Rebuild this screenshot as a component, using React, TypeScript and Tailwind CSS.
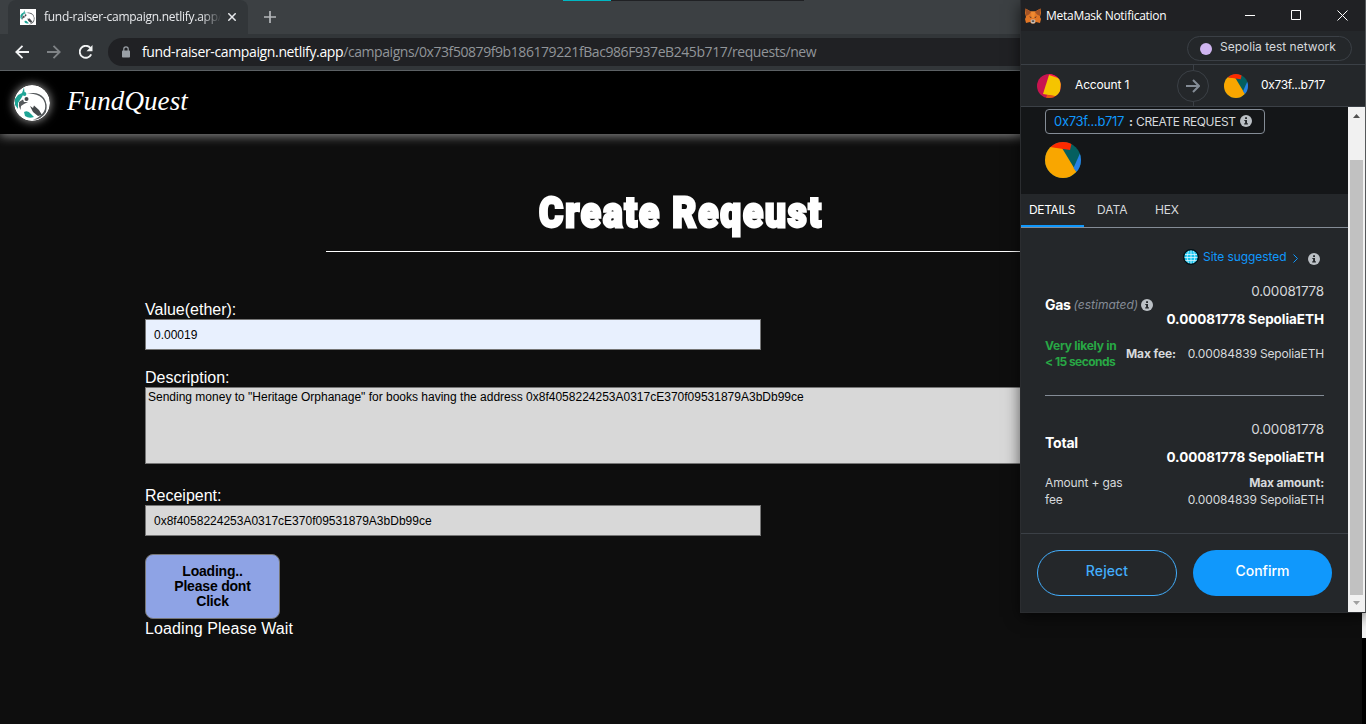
import React from "react";

function CraneLogo({ className }: { className: string }) {
  return (
    <svg viewBox="0 0 36 36" className={`shrink-0 ${className}`}>
      <circle cx="18" cy="18" r="18" fill="#fff" />
      <path d="M1 14 L4 10 L8 8 L10 2.500 L10.500 7 L8 12 L6 15 L4 18 L4 24 L1 20z" fill="#1fa596" />
      <circle cx="10.500" cy="9" r="1.900" fill="#1fa596" />
      <path d="M10 27 Q14 25 17 29 L20 32 Q15 34 11 31z" fill="#1fa596" />
      <path d="M5 17 L9 14.500 L10 17 L14 17 L10 19 L7 21 L6.500 25 Q4 21 5 17z" fill="#55595c" />
      <circle cx="12.500" cy="14" r="2" fill="#44484b" />
      <path d="M13 9 Q24 6 30 13 Q34 19 32 27 Q28 34 19 35 Q29 31 31 24 Q32 17 28 13 Q22 8 13 9z" fill="#55595c" />
      <path d="M16 21 L19 23 L20 20.500 L25 25 L28 30 L24 31 L19 27z" fill="#44484b" />
    </svg>
  );
}

function Jazz({ className }: { className: string }) {
  return (
    <svg viewBox="0 0 36 36" className={`shrink-0 rounded-full ${className}`}>
      <rect width="36" height="36" fill="#045f5f" />
      <path d="M0 4 L17 6 L31.500 30 L24 36 L0 36z" fill="#f9a600" />
      <path d="M5 5 L10 0 L27 0 L25 8z" fill="#fc2a00" />
      <path d="M36 9 L28.500 26 L31.500 30 L36 27z" fill="#2780e3" />
    </svg>
  );
}

function Info({ className }: { className: string }) {
  return (
    <svg viewBox="0 0 12 12" className={`size-3 shrink-0 ${className}`}>
      <circle cx="6" cy="6" r="6" fill="#bbc0c5" />
      <path d="M5.100 2.300h1.900v1.600H5.100zM4.300 4.900h2.700v3.400h.9v1.200H4.200V8.300h.9V6h-.8z" fill="#24272a" />
    </svg>
  );
}

function Fox() {
  return (
    <svg viewBox="0 0 16 16" className="size-4 shrink-0">
      <path d="M.5 .5 L6 3.500h4L15.500 .5 L16 5l-1 4 1 2-1 4-4-1-1.500 1.500h-3L5 14l-4 1-1-4 1-2-1-4z" fill="#e27625" />
      <path d="M.5 .5 L6 4 4 6.500 1 8zM15.500 .5 10 4l2 2.500L15 8z" fill="#a35326" />
      <path d="M6 3.500h4L9.500 10h-3z" fill="#f08a31" />
      <path d="M4 8.500l2.500.5-.5 1zM12 8.500l-2.500.5.5 1z" fill="#3a2b2b" />
      <path d="M5.500 12.500l1-1h3l1 1-.5 2-1 1h-2l-1-1z" fill="#c8bdb4" />
      <path d="M6.800 12.500h2.400v1.200H6.800z" fill="#24272a" />
    </svg>
  );
}

function BrowserChrome() {
  return (
    <header className="relative z-10 h-[71px] shrink-0 border-b border-[#5c6164] bg-[#35363a] font-['Open_Sans','Noto_Sans',sans-serif]">
      <div className="flex h-[34px] bg-[#3c4043] pl-2">
        <div className="flex h-[34px] w-[240px] items-center rounded-t-lg bg-[#323639] pl-3">
          <div className="flex size-4 items-center justify-center bg-white">
            <CraneLogo className="size-4" />
          </div>
          <span className="ml-2 w-[179px] shrink-0 text-[12px] leading-4 tracking-[-0.27px] whitespace-nowrap text-[#e8eaed] [mask-image:linear-gradient(to_right,black_88%,transparent_99%)]">
            fund-raiser-campaign.netlify.app/
          </span>
          <svg viewBox="0 0 8 8" className="ml-[5px] size-2" stroke="#e8eaed" strokeWidth="1.500">
            <path d="M.3 .3l7.400 7.400M7.700 .3L.3 7.700" />
          </svg>
        </div>
        <svg viewBox="0 0 12 12" className="mt-[11px] ml-4 size-3" stroke="#b4b7ba" strokeWidth="1.700">
          <path d="M6 0v12M0 6h12" />
        </svg>
        <div className="ml-[287px] flex h-px w-[241px] bg-[#202124]">
          <div className="h-px w-12 bg-[#00b7c3]" />
        </div>
      </div>
      <div className="flex h-9 items-center bg-[#323639] pl-[15px]">
        <svg viewBox="0 0 14 14" className="size-[14px]" stroke="#f1f3f4" strokeWidth="1.800" fill="none">
          <path d="M14 7H1.500M7.500 .8L1.300 7l6.200 6.200" />
        </svg>
        <svg viewBox="0 0 14 14" className="ml-[18px] size-[14px]" stroke="#7f8386" strokeWidth="1.800" fill="none">
          <path d="M0 7h12.500M6.500 .8L12.700 7l-6.200 6.200" />
        </svg>
        <svg viewBox="0 0 14 14" className="ml-[18px] size-[14px]" fill="none">
          <path d="M12.200 9.300A6 6 0 1 1 11.400 3" stroke="#f1f3f4" strokeWidth="1.900" />
          <path d="M13.500 0v6.200H7.500z" fill="#f1f3f4" />
        </svg>
        <div className="ml-[15px] flex h-7 grow items-center rounded-l-full bg-[#202124] pl-[14px]">
          <svg viewBox="0 0 8 12" className="h-3 w-2">
            <path d="M1.800 5V3a2.200 2.200 0 0 1 4.400 0v2" stroke="#9aa0a6" strokeWidth="1.200" fill="none" />
            <rect y="4.500" width="8" height="7" rx=".8" fill="#9aa0a6" />
          </svg>
          <p className="ml-3 text-[14px] leading-5 whitespace-nowrap">
            <span className="tracking-[-0.36px] text-white">fund-raiser-campaign.netlify.app</span>
            <span className="tracking-[-0.43px] text-[#919599]">
              /campaigns/0x73f50879f9b186179221fBac986F937eB245b717/requests/new
            </span>
          </p>
        </div>
      </div>
    </header>
  );
}

function Page() {
  return (
    <main className="grow bg-[#0e0e0e] font-['Liberation_Sans',Arial,sans-serif] text-white">
      <nav className="flex h-[63px] items-center bg-black pl-[14px] shadow-[0_2px_10px_#888]">
        <CraneLogo className="size-9 rounded-full shadow-[0_0_10px_#aaa]" />
        <span className="mb-1 ml-[17px] font-['Liberation_Serif','Times_New_Roman',serif] text-[27px] leading-8 tracking-[0.1px] italic">
          FundQuest
        </span>
      </nav>
      <section className="px-[145px]">
        <h1 className="ml-[181px] flex h-[118px] w-[710px] items-end justify-center border-b border-white pb-[13px]">
          <span className="origin-center scale-x-[.86] font-['Roboto',sans-serif] text-[43px] leading-[52px] font-black tracking-[2.200px] whitespace-nowrap [-webkit-text-stroke:2.800px_white]">
            Create Reqeust
          </span>
        </h1>
        <form className="pt-12 text-[16px] leading-[18px]" onSubmit={(e) => e.preventDefault()}>
          <label className="block pt-px">Value(ether):</label>
          <div className="flex h-[31px] w-[616px] items-center border border-[#767676] bg-[#e8f0fe] px-2 text-[12px] text-black">
            0.00019
          </div>
          <label className="mt-[18px] block pt-px">Description:</label>
          <div className="h-[77px] w-[980px] border border-[#767676] bg-[#d8d8d8] px-[2px] pt-[2px] text-[12px] leading-[14px] text-black">
            Sending money to "Heritage Orphanage" for books having the address 0x8f4058224253A0317cE370f09531879A3bDb99ce
          </div>
          <label className="mt-[22px] block pt-px">Receipent:</label>
          <div className="flex h-[31px] w-[616px] items-center border border-[#767676] bg-[#d8d8d8] px-2 text-[12px] text-black">
            0x8f4058224253A0317cE370f09531879A3bDb99ce
          </div>
          <button className="mt-[18px] block h-[65px] w-[135px] rounded-lg border border-[#767676] bg-[#8ea3e5] px-5 text-[14px] leading-[15px] font-bold tracking-[-0.2px] text-black">
            Loading.. Please dont Click
          </button>
          <p className="pt-px tracking-[0.1px]">Loading Please Wait</p>
        </form>
      </section>
    </main>
  );
}

function Popup() {
  return (
    <aside className="absolute top-0 left-[1020px] z-20 flex h-[613px] w-[346px] flex-col border-r border-b border-l border-[#2b2d30] border-r-[#55585a] bg-[#24272a] font-[Inter,sans-serif] text-[#d6d9dc] shadow-[0_4px_14px_rgba(0,0,0,.6)]">
      <div className="flex h-[31px] shrink-0 items-center bg-[#202124] pl-1">
        <Fox />
        <span className="ml-[5px] w-[180px] font-['Open_Sans',sans-serif] text-[12px] tracking-[-0.27px] text-white">
          MetaMask Notification
        </span>
        <svg viewBox="0 0 112 12" className="ml-[19px] h-3 w-28" fill="none" stroke="#fff">
          <path d="M0 5.500h10M46.500 .5h9v9h-9zM92.500 .5l10 10M102.500 .5l-10 10" />
        </svg>
      </div>
      <div className="flex h-[34px] shrink-0 items-center justify-end border-b border-[#3b4046] pr-[13px]">
        <div className="mt-0.5 flex h-[25px] w-[165px] items-center rounded-full border border-[#3b4046] pl-3">
          <div className="size-3 rounded-full bg-[#cfb5f0]" />
          <span className="mb-[3px] ml-2 text-[12px] leading-4 whitespace-nowrap">Sepolia test network</span>
        </div>
      </div>
      <div className="flex h-[41px] shrink-0 items-center text-[12px] text-white pl-4">
        <svg viewBox="0 0 24 24" className="size-6 rounded-full">
          <rect width="24" height="24" fill="#c8144f" />
          <path d="M12 0h12v6L12 3z" fill="#fb1950" />
          <path d="M12 1l12 4-1 18-17-3z" fill="#f5c400" />
          <path d="M10 21l8 1-1 2h-8z" fill="#e8590c" />
        </svg>
        <span className="mb-0.5 ml-[14px] w-[102px] tracking-[-0.15px]">Account 1</span>
        <div className="flex h-full flex-col items-center">
          <div className="w-px grow bg-[#3b4046]" />
          <div className="flex size-8 items-center justify-center rounded-full border border-[#3b4046]">
            <svg viewBox="0 0 14 14" className="size-[14px]" fill="none" stroke="#848c96" strokeWidth="2">
              <path d="M0 7h12.500M7 1l6 6-6 6" />
            </svg>
          </div>
          <div className="w-px grow bg-[#3b4046]" />
        </div>
        <Jazz className="ml-[15px] size-6" />
        <span className="mb-0.5 ml-[13px] tracking-[-0.34px]">0x73f...b717</span>
      </div>
      <div className="h-px shrink-0 bg-[#3b4046]" />
      <div className="flex min-h-0 grow">
        <div className="flex w-[327px] shrink-0 flex-col">
          <div className="h-[87px] bg-[#141618] pt-[2px] pl-6">
            <div className="flex h-[25px] w-[220px] items-center rounded border border-[#848c96] pl-2 text-[12px] whitespace-nowrap">
              <span className="w-[71px] text-[13px] tracking-[-0.3px] text-[#1098fc]">0x73f...b717</span>
              <span className="ml-1 font-bold">:</span>
              <span className="ml-[3px] w-[101px] text-[12px] tracking-[-0.38px]">CREATE REQUEST</span>
              <Info className="mb-0.5 ml-[3px]" />
            </div>
            <Jazz className="mt-2 size-9" />
          </div>
          <div className="flex h-[34px] border-b border-[#848c96] text-[12px] leading-8">
            <span className="h-[33px] w-[63px] shrink-0 border-b-2 border-[#1098fc] pl-2 tracking-[-0.35px] text-white">DETAILS</span>
            <span className="ml-[13px] w-[58px]">DATA</span>
            <span className="tracking-[-0.15px]">HEX</span>
          </div>
          <div className="grow px-6 text-[12px]">
            <div className="mt-[20px] flex h-[18px] items-center justify-end pr-1 text-[#1098fc]">
              <svg viewBox="0 0 16 16" className="size-4">
                <circle cx="8" cy="8" r="7.500" fill="#18c5ef" stroke="#071318" />
                <path d="M2 5.500h12M1 8.500h14M2 11.500h12M8 1v14M5.500 1.500q-3 6.500 0 13M10.500 1.500q3 6.500 0 13" stroke="#d8f6ff" fill="none" strokeWidth=".8" />
                <circle cx="8" cy="8" r="7.300" fill="none" stroke="#071318" strokeWidth="1.200" />
              </svg>
              <span className="ml-1 w-[84px] tracking-[-0.07px] whitespace-nowrap">Site suggested</span>
              <svg viewBox="0 0 5 9" className="mt-0.5 ml-[6px] h-[9px] w-[5px]" fill="none" stroke="#1098fc">
                <path d="M.5 .5l4 4-4 4" />
              </svg>
              <Info className="mt-[3px] ml-[10px]" />
            </div>
            <div className="mt-[11px] flex h-[56px] items-center justify-between">
              <div className="mb-px flex items-center whitespace-nowrap">
                <b className="text-[14px] tracking-[-0.3px] text-white">Gas</b>
                <i className="mt-px ml-[3px] text-[12px] text-[#848c96]">(estimated)</i>
                <Info className="ml-[3px]" />
              </div>
              <div className="-ml-4 text-right leading-7 whitespace-nowrap">
                <p className="text-[13.500px] tracking-[-0.2px]">0.00081778</p>
                <p className="text-[13.500px] font-bold tracking-[-0.05px] text-white">0.00081778 SepoliaETH</p>
              </div>
            </div>
            <div className="mt-[5px] flex items-center leading-4 whitespace-nowrap">
              <p className="w-[81px] shrink-0 font-bold tracking-[-0.25px] text-[#28a745]">
                Very likely in
                <br />
                <span className="tracking-[-0.55px]">&lt; 15 seconds</span>
              </p>
              <b className="tracking-[-0.1px]">Max fee:</b>
              <span className="grow text-right tracking-[-0.16px]">0.00084839 SepoliaETH</span>
            </div>
            <div className="mt-[25px] h-px bg-[#848c96]" />
            <div className="mt-[19px] flex h-[56px] items-center justify-between">
              <b className="mb-0.5 text-[14px] tracking-[-0.2px] text-white">Total</b>
              <div className="text-right leading-7 whitespace-nowrap">
                <p className="text-[13.500px] tracking-[-0.2px]">0.00081778</p>
                <p className="text-[13.500px] font-bold tracking-[-0.05px] text-white">0.00081778 SepoliaETH</p>
              </div>
            </div>
            <div className="mt-1 flex justify-between leading-[16.500px]">
              <p className="w-[90px] tracking-[-0.15px]">Amount + gas fee</p>
              <p className="text-right tracking-[-0.16px] whitespace-nowrap">
                <b>Max amount:</b>
                <br />
                0.00084839 SepoliaETH
              </p>
            </div>
          </div>
          <div className="flex h-[79px] shrink-0 gap-4 border-t border-[#3b4046] px-4 pt-4 text-[14px] font-medium">
            <button className="h-[46px] w-[140px] rounded-full border border-[#43aefc] pb-[5px] tracking-[0.1px] text-[#43aefc]">Reject</button>
            <button className="h-[46px] w-[139px] rounded-full bg-[#1098fc] pb-[5px] text-white">Confirm</button>
          </div>
        </div>
        <div className="flex grow flex-col items-center bg-[#f1f1f1]">
          <svg viewBox="0 0 7 4" className="mt-[7px] h-1 w-[7px]"><path d="M0 4L3.500 0 7 4z" fill="#505050" /></svg>
          <div className="mt-[42px] w-[13px] grow bg-[#c1c1c1]" />
          <svg viewBox="0 0 7 4" className="mt-[6px] mb-[7px] h-1 w-[7px]"><path d="M0 0L3.500 4 7 0z" fill="#a0a0a0" /></svg>
        </div>
      </div>
    </aside>
  );
}

export default function App() {
  return (
    <div className="relative flex h-[724px] w-[1366px] flex-col overflow-hidden">
      <BrowserChrome />
      <div className="flex min-h-0 grow">
        <Page />
        <div className="w-1 shrink-0 bg-black">
          <div className="h-[567px] bg-[#f1f1f1]" />
        </div>
      </div>
      <Popup />
    </div>
  );
}
